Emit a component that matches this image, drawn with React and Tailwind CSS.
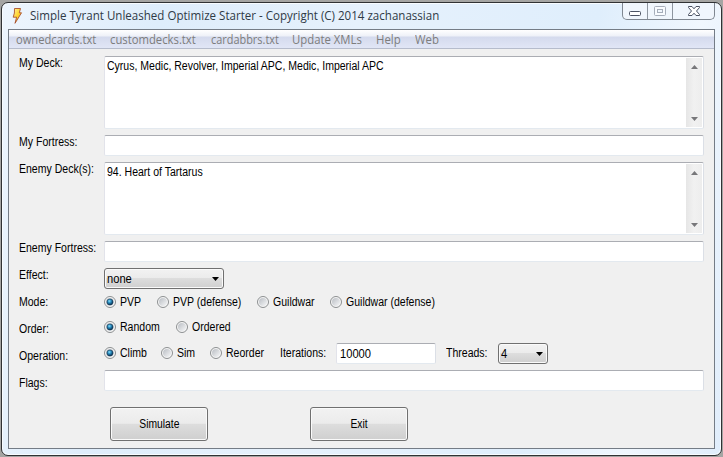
import React from "react";

/* Dialog text: a slightly condensed sans, scaled from its left edge. */
function T({ children, className = "origin-left scale-x-[0.877]" }) {
  return <span className={"inline-block leading-[14px] whitespace-nowrap " + className}>{children}</span>;
}

function Label({ children, className = "" }) {
  return (
    <div className={"w-[85px] shrink-0 leading-[14px] " + className}>
      <T>{children}</T>
    </div>
  );
}

const field =
  "rounded-[2px] border border-t-[#abadb3] border-r-[#dbdfe6] border-b-[#e3e9ef] border-l-[#e2e3ea] bg-white";

function TextField({ className = "", children }) {
  return (
    <div className={field + " flex h-[21px] items-center " + className}>{children}</div>
  );
}

function TextArea({ children }) {
  return (
    <div className={field + " flex h-[73px] w-[600px] justify-between p-px"}>
      <div className="pt-[1px] pl-[1px] leading-[14px]">
        <T>{children}</T>
      </div>
      <div className="flex w-4 shrink-0 flex-col items-center justify-between bg-gradient-to-r from-[#e6e6e6] via-[#f1f1f1] to-[#ededed] pt-[7px] pb-[6px]">
        <svg width="7" height="4" viewBox="0 0 7 4">
          <path d="M3.5 0L7 4H0Z" fill="#77777a" />
        </svg>
        <svg width="7" height="4" viewBox="0 0 7 4">
          <path d="M0 0H7L3.5 4Z" fill="#77777a" />
        </svg>
      </div>
    </div>
  );
}

function Radio({ checked, children, className = "" }) {
  return (
    <div className={"flex items-center " + className}>
      <svg width="12" height="12" viewBox="0 0 12 12" className="mr-1 shrink-0">
        <defs>
          <linearGradient id="ring" x1="0" y1="0" x2="1" y2="1">
            <stop offset="0" stopColor="#b9bdc3" />
            <stop offset="1" stopColor="#f6f7f8" />
          </linearGradient>
          <radialGradient id="dot" cx=".4" cy=".35" r=".6">
            <stop offset="0" stopColor="#8fe0fa" />
            <stop offset=".45" stopColor="#2a8fc2" />
            <stop offset="1" stopColor="#0c3557" />
          </radialGradient>
        </defs>
        <circle cx="6" cy="6" r="5.5" fill="#f6f6f6" stroke="#8c8f91" />
        <circle cx="6" cy="6" r="4" fill="url(#ring)" />
        {checked && <circle cx="6" cy="6" r="3.1" fill="url(#dot)" stroke="#173a56" strokeWidth=".6" />}
      </svg>
      <T>{children}</T>
    </div>
  );
}

const raised =
  "rounded-[3px] border border-[#707070] bg-[linear-gradient(#f2f2f2_0%,#ebebeb_48%,#dddddd_50%,#cfcfcf_100%)] shadow-[inset_0_0_0_1px_#fafafa]";

function Combo({ children, className }) {
  return (
    <div className={raised + " flex h-[21px] items-center justify-between pl-[2px] " + className}>
      <T className="origin-left scale-x-[0.93]">{children}</T>
      <svg width="7" height="4" viewBox="0 0 7 4" className="mr-1">
        <path d="M0 0H7L3.5 4Z" fill="#000" />
      </svg>
    </div>
  );
}

function PushButton({ children, className = "" }) {
  return (
    <div className={raised + " flex h-[34px] w-[98px] items-center justify-center " + className}>
      <T className="scale-x-[0.86]">{children}</T>
    </div>
  );
}

function TitleBar() {
  return (
    <div className="flex h-[26px] shrink-0 items-start justify-between pl-[10px]">
      <div className="flex items-center pt-[5px]">
        <svg width="11" height="16" viewBox="0 0 11 16">
          <defs>
            <linearGradient id="bolt" x1="0" y1="0" x2="1" y2="1">
              <stop offset="0" stopColor="#fff0a0" />
              <stop offset=".5" stopColor="#ffd52e" />
              <stop offset="1" stopColor="#f59a1c" />
            </linearGradient>
          </defs>
          <path d="M2.5 .5H8.5L7.3 4.8H9.5L3 15.3L4.6 9.2H1.2L2.4 5Z" fill="url(#bolt)" stroke="#a8502e" strokeWidth=".9" />
        </svg>
        <span className="ml-[7px] origin-left scale-x-[0.963] font-['Open_Sans','Noto_Sans',sans-serif] text-[12px] leading-4 whitespace-nowrap text-[#2f3a46]">
          Simple Tyrant Unleashed Optimize Starter - Copyright (C) 2014 zachanassian
        </span>
      </div>
      <div className="mr-[6px] flex h-[17px] w-[93px] shrink-0 rounded-b-[5px] border border-t-0 border-[#7f8791] bg-[#f0f6fd]">
        <div className="flex w-[25px] justify-center border-r border-[#8d959f] pt-[8px]">
          <svg width="12" height="5" viewBox="0 0 12 5">
            <rect x=".5" y=".5" width="11" height="4" rx="1" fill="#fff" stroke="#4b5263" />
          </svg>
        </div>
        <div className="flex w-[25px] justify-center border-r border-[#8d959f] pt-[3px]">
          <svg width="12" height="10" viewBox="0 0 12 10">
            <rect x=".5" y=".5" width="11" height="9" rx="1" fill="#f8fbff" stroke="#a5adba" />
            <rect x="3.5" y="3.5" width="5" height="3" fill="#f0f6fd" stroke="#a5adba" />
          </svg>
        </div>
        <div className="flex flex-1 justify-center pt-[3px]">
          <svg width="12" height="10" viewBox="0 0 12 10">
            <path d="M.5 .5H4L6 2.8L8 .5H11.5V1.5L8.5 5L11.5 8.5V9.5H8L6 7.2L4 9.5H.5V8.5L3.5 5L.5 1.5Z" fill="#fff" stroke="#4b5263" />
          </svg>
        </div>
      </div>
    </div>
  );
}

function MenuBar() {
  return (
    <div className="flex h-[19px] shrink-0 items-center border-b border-[#b6bccc] bg-[linear-gradient(#ffffff_0px,#eef1f8_6px,#d4daed_7px,#e1e6f6_18px)] pt-[2px] pl-[7px] font-['Open_Sans','Noto_Sans',sans-serif] text-[12px] leading-4 whitespace-nowrap text-[#7d7d7d]">
      <div className="w-[94px]"><span className="inline-block origin-left scale-x-[0.93]">ownedcards.txt</span></div>
      <div className="w-[101px]"><span className="inline-block origin-left scale-x-[0.94]">customdecks.txt</span></div>
      <div className="w-[81px]"><span className="inline-block origin-left scale-x-[0.91]">cardabbrs.txt</span></div>
      <div className="w-[84px]"><span className="inline-block origin-left scale-x-[0.945]">Update XMLs</span></div>
      <div className="w-[39px]"><span className="inline-block origin-left scale-x-[0.95]">Help</span></div>
      <div><span className="inline-block origin-left scale-x-[0.95]">Web</span></div>
    </div>
  );
}

export default function App() {
  return (
    <div className="h-[457px] w-[723px] overflow-hidden bg-[#a5a5a3] pt-[2px] pr-[1px] pb-[1px] pl-[1px] font-['Liberation_Sans',Arial,sans-serif] text-[12px] text-black">
      <div className="flex h-[454px] w-[721px] flex-col rounded-[7px] border border-[#303234] bg-[linear-gradient(100deg,#edf5fd_0%,#deedfb_20%,#e6f1fc_45%,#dfeefc_75%,#f0f7fe_88%,#e0edfb_100%)] shadow-[inset_0_0_0_1px_#f8fcff]">
        <TitleBar />
        <div className="ml-[6px] flex h-[420px] w-[707px] flex-col border border-[#747c86] bg-[#f0f0f0]">
          <MenuBar />
          <div className="flex flex-col pt-[7px] pl-[10px]">
            <div className="mb-[6px] flex">
              <Label>My Deck:</Label>
              <TextArea>Cyrus, Medic, Revolver, Imperial APC, Medic, Imperial APC</TextArea>
            </div>
            <div className="mb-[6px] flex">
              <Label>My Fortress:</Label>
              <TextField className="w-[600px]" />
            </div>
            <div className="mb-[6px] flex">
              <Label>Enemy Deck(s):</Label>
              <TextArea>94. Heart of Tartarus</TextArea>
            </div>
            <div className="mb-[6px] flex">
              <Label>Enemy Fortress:</Label>
              <TextField className="w-[600px]" />
            </div>
            <div className="flex">
              <Label>Effect:</Label>
              <Combo className="w-[120px]">none</Combo>
            </div>
            <div className="flex h-[26px]">
              <Label className="pt-[6px]">Mode:</Label>
              <Radio checked className="w-[53px]">PVP</Radio>
              <Radio className="w-[100px]">PVP (defense)</Radio>
              <Radio className="w-[73px]">Guildwar</Radio>
              <Radio>Guildwar (defense)</Radio>
            </div>
            <div className="flex h-[25px]">
              <Label className="pt-[7px]">Order:</Label>
              <Radio checked className="h-6 w-[72px]">Random</Radio>
              <Radio className="h-6">Ordered</Radio>
            </div>
            <div className="mt-[3px] mb-[6px] flex h-[21px]">
              <Label className="pt-[6px]">Operation:</Label>
              <Radio checked className="h-5 w-[57px]">Climb</Radio>
              <Radio className="h-5 w-[49px]">Sim</Radio>
              <Radio className="h-5 w-[70px]">Reorder</Radio>
              <div className="w-[56px] pt-[3px] leading-[14px]"><T>Iterations:</T></div>
              <TextField className="w-[100px] pl-[3px]">
                <T className="origin-left scale-x-[0.93]">10000</T>
              </TextField>
              <div className="ml-[10px] w-[52px] pt-[3px] leading-[14px]"><T>Threads:</T></div>
              <Combo className="w-[50px]">4</Combo>
            </div>
            <div className="mb-4 flex">
              <Label className="pt-[6px]">Flags:</Label>
              <TextField className="w-[600px]" />
            </div>
            <div className="flex pl-[91px]">
              <PushButton>Simulate</PushButton>
              <PushButton className="ml-[102px]">Exit</PushButton>
            </div>
          </div>
        </div>
      </div>
    </div>
  );
}
